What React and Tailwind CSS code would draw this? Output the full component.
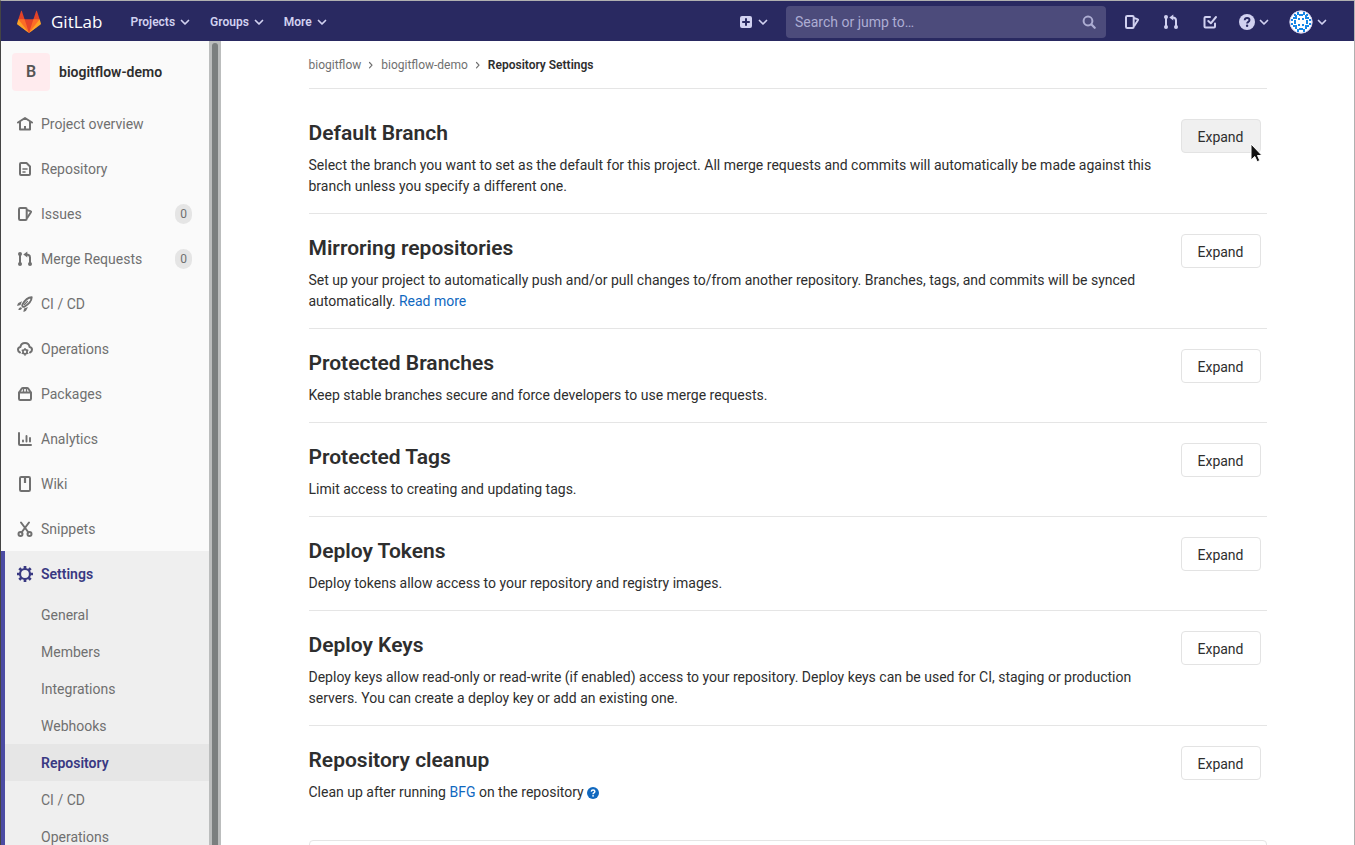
import React from "react";

const stroke = {
  fill: "none",
  stroke: "currentColor",
  strokeWidth: 2,
  strokeLinejoin: "round",
  strokeLinecap: "round",
};

function Icon({ children, className = "size-4" }) {
  return (
    <svg viewBox="0 0 16 16" aria-hidden="true" className={`shrink-0 ${className}`}>
      {children}
    </svg>
  );
}

const shapes = {
  home: (
    <g {...stroke} strokeWidth="2">
      <path d="M1 6.500 8 2l7 4.500M3 6v7.500h10V6" />
      <path d="M8 13v-3" strokeLinecap="butt" />
    </g>
  ),
  doc: (
    <g {...stroke}>
      <path d="M3 3a1 1 0 0 1 1-1h5.500L13 5.500V13a1 1 0 0 1-1 1H4a1 1 0 0 1-1-1z" />
      <path d="M6 8h4M6 11h2" strokeWidth="1.600" />
    </g>
  ),
  issues: (
    <g {...stroke}>
      <path d="M2 3.200A1.200 1.200 0 0 1 3.200 2h5.300a1.200 1.200 0 0 1 1.200 1.200v9.600A1.200 1.200 0 0 1 8.500 14H3.200A1.200 1.200 0 0 1 2 12.800z" />
      <path d="m10.500 4.300 2.900.8c.6.200.8.600.5 1.100L10.500 11.500" strokeWidth="2" />
    </g>
  ),
  merge: (
    <g>
      <g {...stroke} strokeLinecap="butt">
        <path d="M3 3v10M13 13V6.500c0-2-1.200-3-3.500-3" />
      </g>
      <circle cx="3" cy="3" r="2" fill="currentColor" />
      <circle cx="3" cy="13" r="2" fill="currentColor" />
      <circle cx="13" cy="13" r="2" fill="currentColor" />
      <path d="M10.300.6v6L6.300 3.600z" fill="currentColor" />
    </g>
  ),
  rocket: (
    <g>
      <g {...stroke} strokeWidth="1.900">
        <path d="M14.700 1.300C11 1.500 8 4 5.500 8.500c-.5 1-.3 1.500.2 2s1 .6 2 0c4.300-2.500 6.800-5.500 7-9.200z" />
      </g>
      <path d="m7.500 8.500 3-3.200" {...stroke} strokeWidth="1.200" />
      <path d="M5 5.200 1.800 6.800C.8 7.300.4 8.500.2 10l3.300-1zM11 11l-1.700 3.200c-.6 1-1.700 1.400-3 1.600l.8-3.300zM4 11.200l1 1c-.8 1.600-2 2-3.600 1.900C1.400 12.600 2.400 11.500 4 11.200z" fill="currentColor" />
    </g>
  ),
  cloud: (
    <g>
      <path d="M3 11.500C1.700 11 1 10 1 8.800c0-1.500 1-2.500 2.400-2.700C3.800 3.500 5.600 2 8 2s4.200 1.500 4.600 4.100C14 6.300 15 7.300 15 8.800c0 1.200-.7 2.200-2 2.700" {...stroke} />
      <circle cx="8" cy="10.800" r="2.100" {...stroke} strokeWidth="1.700" />
      <path d="M8 7v2M8 12.600v2.200M4.700 8.900l1.700 1M9.600 11.700l1.700 1M11.300 8.900l-1.700 1M6.400 11.700l-1.700 1" stroke="currentColor" strokeWidth="1.300" />
    </g>
  ),
  pack: (
    <g {...stroke}>
      <path d="M2 6.500h12v6.300a1.200 1.200 0 0 1-1.200 1.200H3.200A1.200 1.200 0 0 1 2 12.800z" />
      <path d="M2.500 6 4.600 2.800c.4-.6.800-.8 1.400-.8h4c.6 0 1 .2 1.400.8L13.500 6" />
      <path d="M6.500 3v3M9.500 3v3" strokeWidth="1.300" strokeLinecap="butt" />
    </g>
  ),
  chart: (
    <g {...stroke}>
      <path d="M2 2v11a1 1 0 0 0 1 1h11" />
      <path d="M6 9.500v1M9.500 5v5.500M13 7v3.500" strokeWidth="1.900" />
    </g>
  ),
  book: (
    <g {...stroke}>
      <rect x="3" y="1" width="10" height="14" rx="1.200" />
      <path d="M8 1.500V7" strokeLinecap="butt" strokeWidth="2.200" />
    </g>
  ),
  scissors: (
    <g {...stroke}>
      <circle cx="3.500" cy="13" r="2" />
      <circle cx="12.500" cy="13" r="2" />
      <path d="m4 1.500 7.500 10M12 1.500l-7.500 10" />
    </g>
  ),
  gear: (
    <g>
      <circle cx="8" cy="8" r="5" fill="none" stroke="currentColor" strokeWidth="2.200" />
      <path d="M8 0v3M8 13v3M0 8h3M13 8h3M2.300 2.300l2 2M11.700 11.700l2 2M13.700 2.300l-2 2M4.300 11.700l-2 2" stroke="currentColor" strokeWidth="2.700" />
    </g>
  ),
  plus: (
    <path fillRule="evenodd" d="M4 2h8a2 2 0 0 1 2 2v8a2 2 0 0 1-2 2H4a2 2 0 0 1-2-2V4a2 2 0 0 1 2-2zm3 2.200V7H4.200v2H7v2.800h2V9h2.800V7H9V4.200z" fill="currentColor" />
  ),
  search: (
    <g {...stroke}>
      <circle cx="7" cy="7" r="4.400" />
      <path d="m10.500 10.500 3.200 3.200" strokeWidth="2.300" />
    </g>
  ),
  todo: (
    <g {...stroke}>
      <path d="M8 3H3.500a1 1 0 0 0-1 1v8.500a1 1 0 0 0 1 1H12a1 1 0 0 0 1-1V9.500" />
      <path d="m6.300 7 2.500 2.300 5.200-6.300" />
    </g>
  ),
  help: (
    <g>
      <circle cx="8" cy="8" r="8" fill="currentColor" />
      <path d="M5.700 6.200C5.800 4.800 6.700 4 8.100 4c1.400 0 2.400.8 2.400 2.100 0 1.900-2.400 1.700-2.400 3.500" fill="none" stroke="var(--mark)" strokeWidth="1.900" />
      <circle cx="8.100" cy="11.800" r="1.200" fill="var(--mark)" />
    </g>
  ),
};

function Chevron() {
  return (
    <svg viewBox="0 0 10 10" aria-hidden="true" className="size-2.5 shrink-0">
      <path d="m1.500 3.500 3.500 3.500 3.500-3.500" {...stroke} strokeWidth="1.700" />
    </svg>
  );
}

function Crumb() {
  return (
    <svg viewBox="0 0 6 10" aria-hidden="true" className="h-2.5 w-1.5 shrink-0">
      <path d="m1.500 2.500 2.500 2.700-2.500 2.700" {...stroke} strokeWidth="1.200" />
    </svg>
  );
}

function Tanuki() {
  return (
    <svg viewBox="0 0 36 36" aria-hidden="true" className="size-6">
      <path fill="#e24329" d="m2 14 9.380 9v-9l-4-12.280c-.205-.632-1.176-.632-1.380 0z" />
      <path fill="#e24329" d="m34 14-9.380 9v-9l4-12.280c.205-.632 1.176-.632 1.380 0z" />
      <path fill="#e24329" d="M18 34.380 3 14h30z" />
      <path fill="#fc6d26" d="M18 34.380 11.380 14H2l4 11z" />
      <path fill="#fc6d26" d="M18 34.380 24.620 14H34l-4 11z" />
      <path fill="#fca326" d="M2 14 .1 20.160c-.18.565 0 1.200.5 1.560l17.420 12.660z" />
      <path fill="#fca326" d="m34 14 1.900 6.160c.18.565 0 1.200-.5 1.560L18 34.380z" />
    </svg>
  );
}

function Identicon() {
  return (
    <svg viewBox="0 0 24 24" aria-hidden="true" className="size-6">
      <circle cx="12" cy="12" r="11.200" fill="#fff" stroke="#c9c9ea" />
      <g fill="#1787e6">
        <path d="M8 2h2v3H8zM14 2h2v3h-2zM10 4h4v2h-4zM5 4h2v2H5zM17 4h2v2h-2zM4 7h4v2H4zM16 7h4v2h-4zM6 5h2v2H6zM16 5h2v2h-2zM2 9h2v2H2zM20 9h2v2h-2zM9 8h2v2H9zM13 8h2v2h-2zM5 10h2v4H5zM17 10h2v4h-2zM2 13h2v2H2zM20 13h2v2h-2zM9 14h2v2H9zM13 14h2v2h-2zM4 15h4v2H4zM16 15h4v2h-4zM6 17h2v2H6zM16 17h2v2h-2zM10 18h4v2h-4zM8 19h2v3H8zM14 19h2v3h-2z" />
      </g>
    </svg>
  );
}

const items = [
  ["Project overview", "home"],
  ["Repository", "doc"],
  ["Issues", "issues", 0],
  ["Merge Requests", "merge", 0],
  ["CI / CD", "rocket"],
  ["Operations", "cloud"],
  ["Packages", "pack"],
  ["Analytics", "chart"],
  ["Wiki", "book"],
  ["Snippets", "scissors"],
];

const settings = ["General", "Members", "Integrations", "Webhooks", "Repository", "CI / CD", "Operations"];

const link = "text-[#1068bf]";

const sections = [
  ["Default Branch", "Select the branch you want to set as the default for this project. All merge requests and commits will automatically be made against this branch unless you specify a different one."],
  ["Mirroring repositories", <>Set up your project to automatically push and/or pull changes to/from another repository. Branches, tags, and commits will be synced automatically. <a href="#read-more" className={link}>Read more</a></>],
  ["Protected Branches", "Keep stable branches secure and force developers to use merge requests."],
  ["Protected Tags", "Limit access to creating and updating tags."],
  ["Deploy Tokens", "Deploy tokens allow access to your repository and registry images."],
  ["Deploy Keys", "Deploy keys allow read-only or read-write (if enabled) access to your repository. Deploy keys can be used for CI, staging or production servers. You can create a deploy key or add an existing one."],
  ["Repository cleanup", <>Clean up after running <a href="#bfg" className={link}>BFG</a> on the repository <a href="#help" aria-label="Help" className={`inline-block align-[-2px] [--mark:#fff] ${link}`}><Icon className="size-3">{shapes.help}</Icon></a></>],
];

function Header() {
  return (
    <header className="flex h-10 shrink-0 items-center bg-[#292961] pt-px pr-[27px] pl-4 text-[#d1d1f0] [--mark:#292961]">
      <a href="#home" className="flex items-center gap-2.5 text-[17px] text-white font-['Open_Sans',sans-serif]">
        <Tanuki />
        GitLab
      </a>
      <nav className="ml-7 flex gap-5 text-xs font-semibold">
        {["Projects", "Groups", "More"].map((name) => (
          <button key={name} className="flex items-center gap-[5px]">{name}<Chevron /></button>
        ))}
      </nav>
      <div className="ml-auto flex items-center">
        <button aria-label="New" className="mr-[18px] flex items-center gap-1"><Icon>{shapes.plus}</Icon><Chevron /></button>
        <label className="mr-[18px] flex h-8 w-80 items-center rounded bg-[#4c4b7b] px-[9px]">
          <input type="text" aria-label="Search" placeholder="Search or jump to…" className="min-w-0 flex-1 bg-transparent text-sm outline-none placeholder:text-[#adadd3]" />
          <span className="text-[#adadd3]"><Icon>{shapes.search}</Icon></span>
        </label>
        <div className="flex items-center gap-[23px]">
          <a href="#issues" aria-label="Issues"><Icon>{shapes.issues}</Icon></a>
          <a href="#merge-requests" aria-label="Merge requests"><Icon>{shapes.merge}</Icon></a>
          <a href="#todos" aria-label="To-Do List"><Icon>{shapes.todo}</Icon></a>
        </div>
        <button aria-label="Help" className="ml-[21px] flex items-center gap-1"><Icon>{shapes.help}</Icon><Chevron /></button>
        <button aria-label="Account" className="ml-5 flex items-center gap-1"><Identicon /><Chevron /></button>
      </div>
    </header>
  );
}

function Sidebar() {
  return (
    <aside className="flex shrink-0">
      <div className="w-52 overflow-hidden bg-[#fafafa] text-sm text-[#707070]">
        <a href="#project" className="flex h-[60px] items-center gap-[9px] pt-px pl-[11px] font-semibold text-[#2e2e2e]">
          <span className="flex size-[38px] items-center justify-center rounded bg-[#ffebee] text-base text-[#555]">B</span>
          biogitflow-demo
        </a>
        <nav>
          {items.map(([name, icon, count]) => (
            <a key={name} href="#nav" className="flex h-[45px] items-center gap-2 pr-[17px] pl-4">
              <Icon>{shapes[icon]}</Icon>
              <span className="flex-1">{name}</span>
              {count !== undefined && <span className="rounded-full bg-[#e5e5e5] px-[5px] text-xs leading-5">{count}</span>}
            </a>
          ))}
          <div className="border-l-4 border-[#4b4ba3] bg-[#efefef]">
            <a href="#settings" className="flex h-[45px] items-center gap-2 pl-3 font-semibold text-[#393982]">
              <Icon>{shapes.gear}</Icon>
              Settings
            </a>
            {settings.map((name) => (
              <a
                key={name}
                href="#sub"
                className={`flex h-[37px] items-center pl-9 ${name === "Repository" ? "bg-[#e6e6e6] font-semibold text-[#393982]" : ""}`}
              >
                {name}
              </a>
            ))}
          </div>
        </nav>
      </div>
      <div className="w-3 bg-[#bbbdbd] px-[3px] pt-0.5">
        <div className="h-full rounded-t-full bg-[#7b7f7f]" />
      </div>
    </aside>
  );
}

function Cursor() {
  return (
    <svg viewBox="0 0 13 20" aria-hidden="true" className="absolute top-6 left-[69px] h-5 w-[13px]">
      <path d="M1 1v16l3.800-3.500 2.400 5.200 2.600-1.200L7.500 12.500H12z" fill="#111" stroke="#fff" />
    </svg>
  );
}

function Section({ title, children, first }) {
  return (
    <section className="flex items-start justify-between border-b border-[#e5e5e5] pt-5 pb-4 last:border-0">
      <div className="max-w-[846px]">
        <h4 className="mb-2 text-[21px] leading-7 font-semibold">{title}</h4>
        <p className="text-sm leading-[21px]">{children}</p>
      </div>
      <div className="relative mr-1.5 shrink-0">
        <button className={`h-[34px] w-20 rounded border border-[#e3e3e3] pt-px text-sm ${first ? "bg-[#f0f0f0]" : "bg-white"}`}>Expand</button>
        {first && <Cursor />}
      </div>
    </section>
  );
}

export default function App() {
  return (
    <div className="flex h-screen flex-col overflow-hidden border-t border-r border-l border-t-[#b0b0b0] border-r-[#b0b0b0] border-l-[#444] bg-white font-[Roboto,sans-serif] text-[#2e2e2e]">
      <Header />
      <div className="flex min-h-0 flex-1">
        <Sidebar />
        <main className="min-w-0 flex-1 overflow-hidden px-4">
          <div className="mx-auto max-w-[958px]">
            <nav aria-label="Breadcrumb" className="mb-2.5 flex h-12 items-center gap-[7px] border-b border-[#e5e5e5] text-xs text-[#707070]">
              <a href="#group">biogitflow</a>
              <Crumb />
              <a href="#project">biogitflow-demo</a>
              <Crumb />
              <a href="#here" className="font-semibold text-[#2e2e2e]">Repository Settings</a>
            </nav>
            <div>
              {sections.map(([title, body], i) => (
                <Section key={title} title={title} first={i === 0}>{body}</Section>
              ))}
            </div>
            <div className="mt-[21px] h-24 rounded border border-[#e5e5e5]" />
          </div>
        </main>
      </div>
    </div>
  );
}
